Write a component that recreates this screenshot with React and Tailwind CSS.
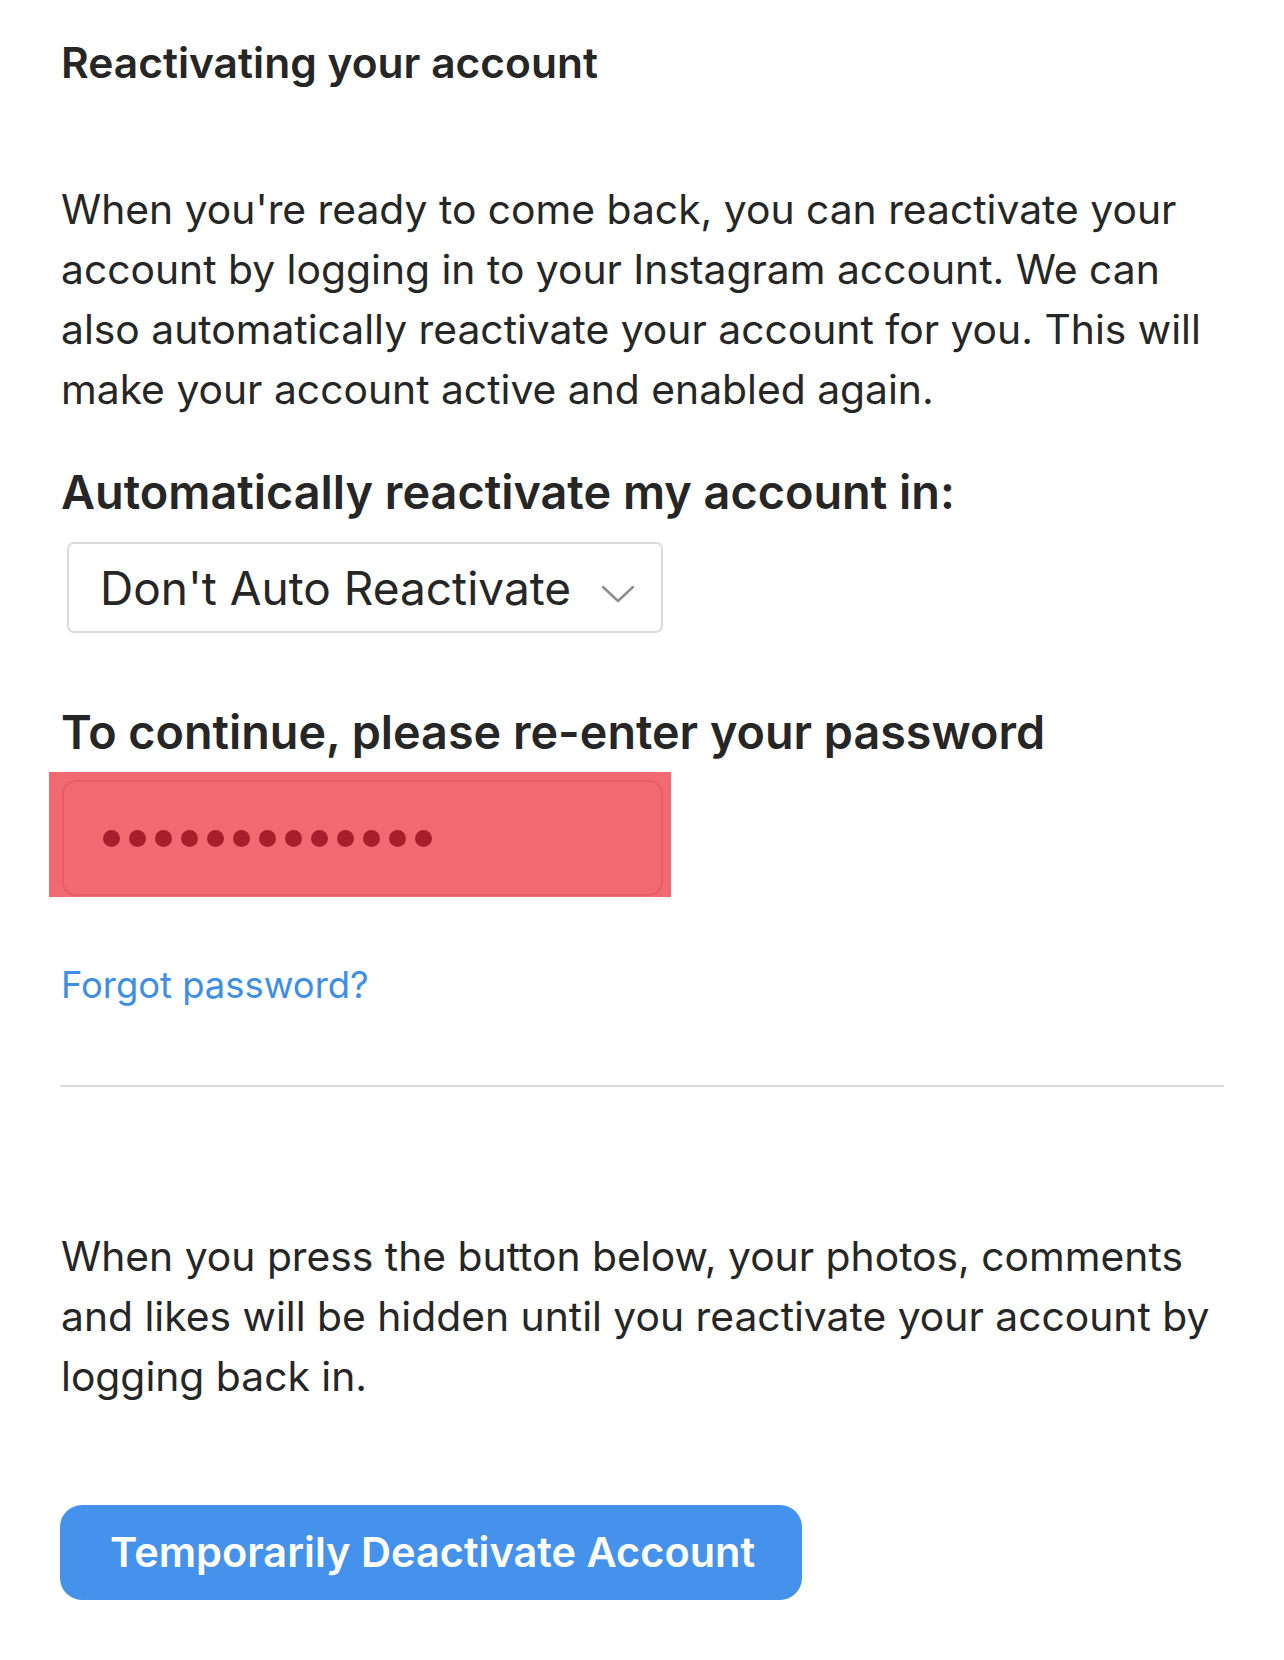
export default function App() {
  const dots = Array.from({ length: 13 });

  return (
    <div className="min-h-[1660px] bg-white text-[#262626]" style={{ fontFamily: 'Inter, "Noto Sans", sans-serif' }}>
      <div className="pl-[61px] pr-[60px] pt-[39px]">
        <h2 className="whitespace-nowrap text-[42.5px] font-semibold leading-[48px]">Reactivating your account</h2>

        <p className="mt-[92px] whitespace-nowrap text-[40.8px] leading-[60px]">
          When you're ready to come back, you can reactivate your
          <br />
          account by logging in to your Instagram account. We can
          <br />
          also automatically reactivate your account for you. This will
          <br />
          make your account active and enabled again.
        </p>

        <h3 className="mt-[48px] whitespace-nowrap text-[46.8px] font-semibold leading-[50px]">
          Automatically reactivate my account in:
        </h3>

        <div className="ml-[6px] mt-[25px] flex h-[91px] w-[596px] items-center justify-between rounded-[7px] border-2 border-[#dbdbdb] pl-[31px] pr-[26px]">
          <span className="whitespace-nowrap text-[46px] leading-none">Don't Auto Reactivate</span>
          <svg width="34" height="18" viewBox="0 0 34 18" className="mt-[12px]">
            <path d="M2 2 L17 16 L32 2" fill="none" stroke="#8e8e8e" strokeWidth="2.5" strokeLinecap="round" strokeLinejoin="round" />
          </svg>
        </div>

        <h3 className="mt-[74px] whitespace-nowrap text-[46.7px] font-semibold leading-[50px]">
          To continue, please re-enter your password
        </h3>

        <div className="-ml-[12px] mt-[15px] h-[125px] w-[622px] bg-[#f16a72] pb-[1px] pl-[13px] pr-[8px] pt-[8px]">
          <div className="flex h-full items-center gap-[9px] rounded-[14px] border-2 border-[#e65d66] pl-[39px]">
            {dots.map((_, i) => (
              <span key={i} className="h-[17px] w-[17px] rounded-full bg-[#a81f2b]" />
            ))}
          </div>
        </div>

        <a href="#" className="mt-[68px] block whitespace-nowrap text-[36.4px] leading-[40px] text-[#3d8fe6]">
          Forgot password?
        </a>

        <div className="-ml-[1px] mt-[80px] h-[2px] w-[1164px] bg-[#dcdcdc]" />

        <p className="mt-[139px] whitespace-nowrap text-[40.8px] leading-[60px]">
          When you press the button below, your photos, comments
          <br />
          and likes will be hidden until you reactivate your account by
          <br />
          logging back in.
        </p>

        <button className="-ml-[1px] mt-[99px] flex h-[95px] w-[742px] items-center rounded-[22px] bg-[#4592ec] pl-[50px] text-[41.5px] font-semibold text-white">
          Temporarily Deactivate Account
        </button>
      </div>
    </div>
  );
}
